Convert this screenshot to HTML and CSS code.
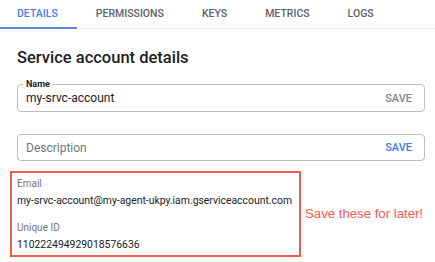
FILE: index.html
```html
<!DOCTYPE html>
<html>
<head>
<meta charset="utf-8">
<link rel="stylesheet" href="styles.css">
</head>
<body>
<nav class="tabs">
  <div class="tab active">DETAILS</div>
  <div class="tab">PERMISSIONS</div>
  <div class="tab">KEYS</div>
  <div class="tab">METRICS</div>
  <div class="tab">LOGS</div>
</nav>
<main class="content">
  <h1 class="title">Service account details</h1>
  <fieldset class="field">
    <legend class="field-label">Name</legend>
    <span class="field-value">my-srvc-account</span>
    <span class="save">SAVE</span>
  </fieldset>
  <div class="field plain">
    <span class="field-value placeholder">Description</span>
    <span class="save blue">SAVE</span>
  </div>
  <div class="info-row">
    <div class="highlight">
      <div class="info-label">Email</div>
      <div class="info-value">my-srvc-account@my-agent-ukpy.iam.gserviceaccount.com</div>
      <div class="info-label second">Unique ID</div>
      <div class="info-value">110222494929018576636</div>
    </div>
    <div class="note">Save these for later!</div>
  </div>
</main>
</body>
</html>
```
FILE: styles.css
```css
* { box-sizing: border-box; }
body {
  margin: 0;
  background: #fff;
  font-family: Roboto, "Liberation Sans", sans-serif;
  color: #202124;
}
.tabs {
  display: flex;
  height: 29px;
  border-bottom: 1px solid #ebebeb;
}
.tab {
  padding: 0 19px;
  font-size: 10.5px;
  font-weight: 500;
  color: #606368;
  line-height: 27px;
}
.tab:first-child { padding-left: 17px; }
.tab.active {
  color: #4a7ee0;
  border-bottom: 2px solid #5b86dc;
  margin-bottom: -1px;
}
.content {
  padding: 0 10px 0 17px;
}
.title {
  margin: 19px 0 11px;
  font-size: 16.5px;
  font-weight: 500;
  line-height: 20px;
}
.field {
  margin: 0;
  padding: 0 12px 0 8px;
  height: 27px;
  border: 1px solid #bdbdbd;
  border-radius: 4px;
  display: flex;
  align-items: center;
  justify-content: space-between;
  min-width: 0;
}
fieldset.field {
  height: 33px;
  padding-bottom: 4px;
}
.field-label {
  font-size: 9px;
  font-weight: 700;
  padding: 0 3px;
  margin-left: -3px;
  line-height: 10px;
  color: #202124;
}
.field-value {
  font-size: 12px;
  color: #202124;
}
.placeholder { color: #70757a; }
.save {
  font-size: 11px;
  font-weight: 500;
  color: #80868b;
}
.save.blue { color: #3f7be0; }
.plain { margin-top: 22px; }
.info-row {
  display: flex;
  align-items: center;
  gap: 4px;
  margin: 10px 0 0 -7px;
}
.highlight {
  flex-shrink: 0;
  border: 2px solid #f5584c;
  width: 291px;
  padding: 4px 0 1px 5px;
}
.info-label {
  font-size: 10px;
  color: #757575;
  line-height: 14px;
}
.info-label.second { margin-top: 10.5px; }
.info-value {
  margin-top: 1px;
  font-size: 10.4px;
  color: #202124;
  line-height: 18px;
  white-space: nowrap;
}
.note {
  color: #f5584c;
  font-size: 13.2px;
  white-space: nowrap;
  font-family: "Liberation Sans", Arial, sans-serif;
}
```
